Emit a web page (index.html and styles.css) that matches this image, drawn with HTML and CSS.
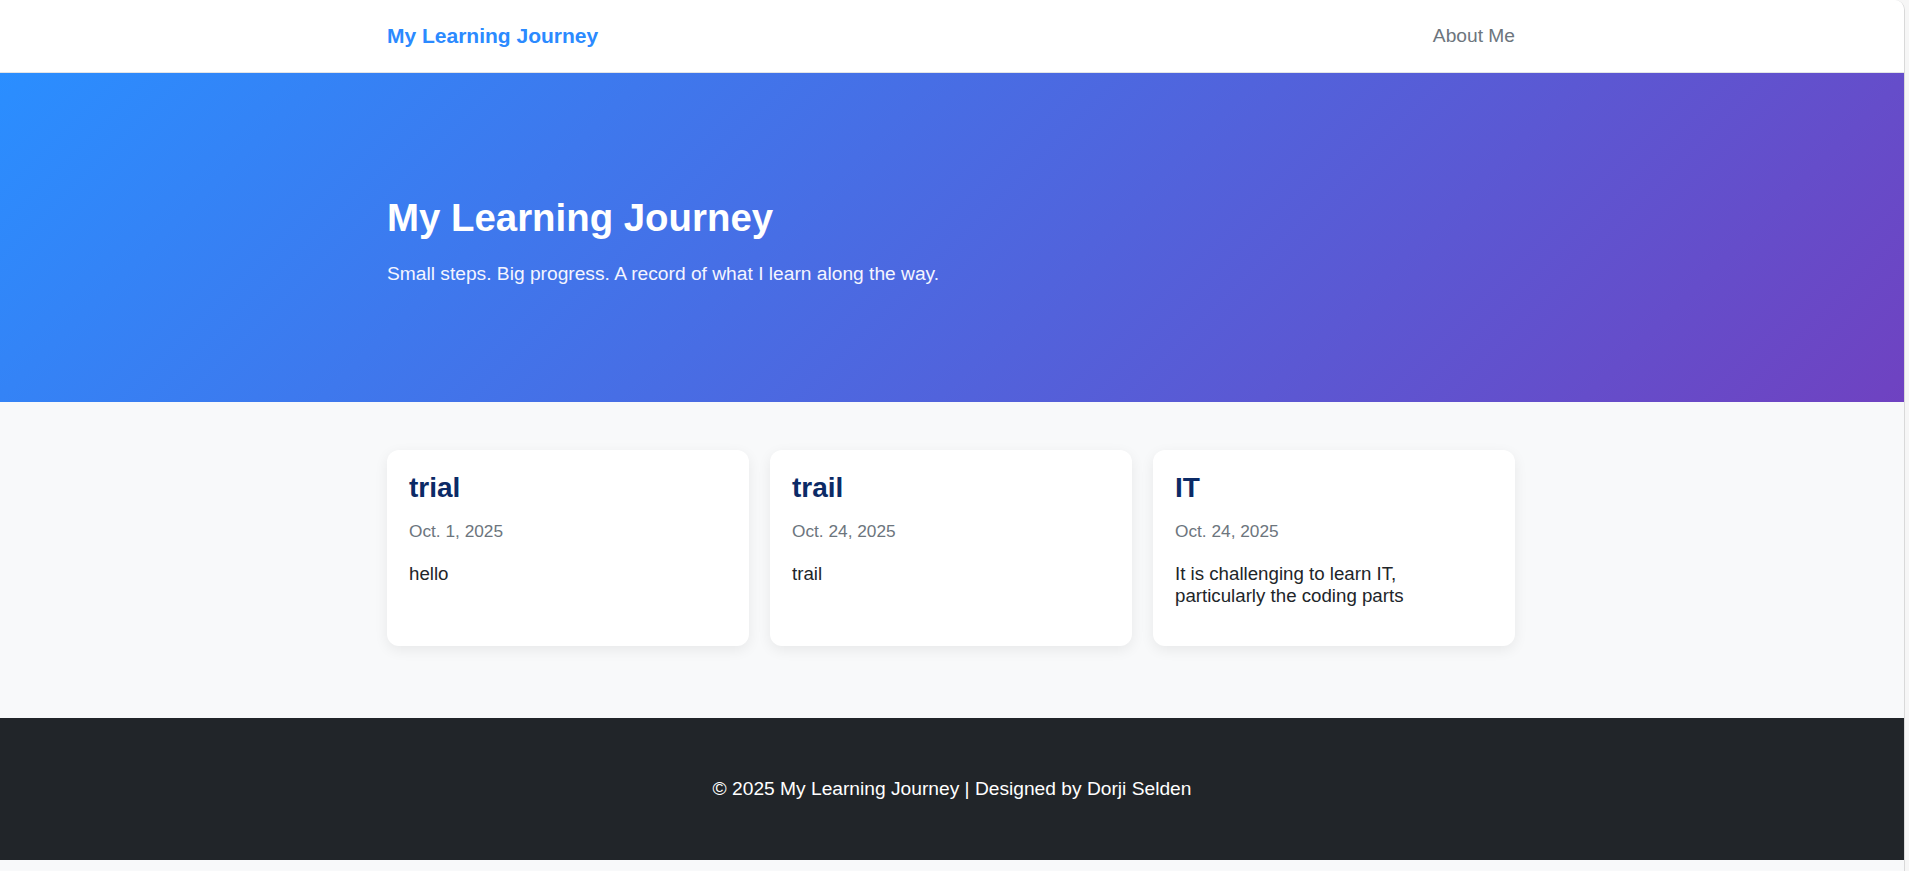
FILE: index.html
```html
<!DOCTYPE html>
<html lang="en">
<head>
<meta charset="utf-8">
<title>My Learning Journey</title>
<link rel="stylesheet" href="styles.css">
</head>
<body>
<div class="window">
  <nav class="navbar">
    <div class="container nav-inner">
      <a class="brand" href="#">My Learning Journey</a>
      <a class="nav-link" href="#">About Me</a>
    </div>
  </nav>
  <header class="hero">
    <div class="container">
      <h1 class="hero-title">My Learning Journey</h1>
      <p class="hero-sub">Small steps. Big progress. A record of what I learn along the way.</p>
    </div>
  </header>
  <main class="posts">
    <div class="container grid">
      <article class="card">
        <h3 class="card-title">trial</h3>
        <div class="card-date">Oct. 1, 2025</div>
        <p class="card-text">hello</p>
      </article>
      <article class="card">
        <h3 class="card-title">trail</h3>
        <div class="card-date">Oct. 24, 2025</div>
        <p class="card-text">trail</p>
      </article>
      <article class="card">
        <h3 class="card-title">IT</h3>
        <div class="card-date">Oct. 24, 2025</div>
        <p class="card-text">It is challenging to learn IT, particularly the coding parts</p>
      </article>
    </div>
  </main>
  <footer class="footer">
    <p class="footer-text">© 2025 My Learning Journey | Designed by Dorji Selden</p>
  </footer>
</div>
</body>
</html>
```
FILE: styles.css
```css
html, body {
  margin: 0;
  padding: 0;
}
body {
  background: #f6f6f6;
  font-family: "Liberation Sans", Arial, sans-serif;
  color: #212529;
  height: 871px;
  overflow: hidden;
}
.window {
  width: 1904px;
  height: 871px;
  border-right: 1px solid #d9d9d9;
  border-top-right-radius: 10px;
  overflow: hidden;
  background: #f8f9fa;
}
.container {
  width: 1128px;
  margin: 0 auto;
  padding-right: 2px;
}
.navbar {
  background: #ffffff;
  height: 72px;
  border-bottom: 1px solid #e2e4e7;
}
.nav-inner {
  height: 72px;
  display: flex;
  align-items: center;
  justify-content: space-between;
}
.brand {
  color: #2b8aff;
  font-weight: 700;
  font-size: 21px;
  text-decoration: none;
}
.nav-link {
  color: #6c757d;
  font-size: 19.2px;
  text-decoration: none;
}
.hero {
  background: linear-gradient(135deg, #2a8eff 0%, #6f42c1 100%);
  color: #ffffff;
  padding: 122px 0 113px;
}
.hero-title {
  margin: 0;
  font-size: 38.4px;
  line-height: 1.2;
  font-weight: 700;
}
.hero-sub {
  margin: 19px 0 0;
  font-size: 19.2px;
  line-height: 1.5;
  color: #f4f5ff;
}
.posts {
  padding: 48px 0 72px;
}
.grid {
  display: grid;
  grid-template-columns: repeat(3, 1fr);
  gap: 21px;
}
.card {
  background: #ffffff;
  border-radius: 12px;
  box-shadow: 0 4px 14px rgba(0, 0, 0, 0.07);
  padding: 21px 26px 22px 22px;
}
.card-title {
  margin: 0 0 18px;
  font-size: 28px;
  line-height: 1.2;
  font-weight: 700;
  color: #0b2a66;
}
.card-date {
  font-size: 17.28px;
  line-height: 1.15;
  color: #6c757d;
  margin-bottom: 21px;
}
.card-text {
  margin: 0 0 18px;
  font-size: 18.7px;
  line-height: 1.15;
  color: #212529;
}
.footer {
  background: #212529;
  color: #ffffff;
  padding: 60px 0;
  text-align: center;
}
.footer-text {
  margin: 0;
  font-size: 19.2px;
  line-height: 1.15;
}
```
